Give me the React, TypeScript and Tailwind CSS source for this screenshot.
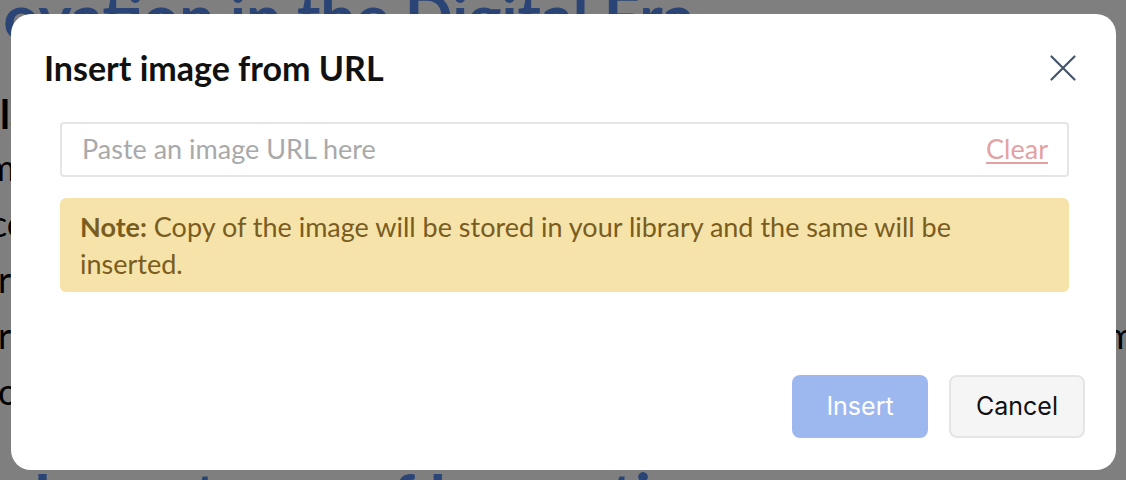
import React from "react";

export default function App() {
  return (
    <div className="relative w-[1126px] h-[480px] overflow-hidden bg-white" style={{ fontFamily: "Lato, 'Noto Sans', sans-serif" }}>
      {/* Document behind the modal */}
      <div className="flex flex-col">
        <div className="whitespace-nowrap ml-[-86px] mt-[-14px] text-[63px] leading-[60px] font-bold text-[#5588ea]">
          Innovation in the Digital Era
        </div>
        <div className="whitespace-nowrap mt-[43px] text-[40px] leading-[50px] font-bold text-black">
          latest developments
        </div>
        <div className="flex flex-col text-[36px] leading-[56px] text-black whitespace-nowrap">
          <div className="ml-[-14px]">mation and creative thinking</div>
          <div className="ml-[-10px]">ccess across every industry</div>
          <div className="ml-[-2px]">rapid change in technology</div>
          <div className="ml-[-2px]">rapid adoption of new digital tools shapes the way people work and communicate today, for</div>
          <div className="ml-[-2px]">opportunities</div>
        </div>
        <div className="whitespace-nowrap ml-[-14px] mt-[46px] text-[61px] leading-[60px] font-bold text-[#5588ea]">
          e Importance of Innovation
        </div>
      </div>

      {/* Overlay */}
      <div className="absolute inset-0 bg-black/50 pl-[11px] pt-[14px]">
        <div className="w-[1105px] h-[456px] bg-white rounded-[20px] flex flex-col">
          <div className="flex items-center justify-between pl-[33px] pr-[40px] pt-[24px] h-[84px]">
            <div className="text-[34px] font-bold text-[#111] leading-[60px]">Insert image from URL</div>
            <svg width="26" height="26" viewBox="0 0 26 26" fill="none">
              <path d="M1.5 1.5 L24.5 24.5 M24.5 1.5 L1.5 24.5" stroke="#44566a" strokeWidth="2.2" strokeLinecap="round" />
            </svg>
          </div>
          <div className="pl-[49px] pr-[47px] mt-[24px] flex flex-col">
            <div className="flex items-center h-[55px] border-2 border-[#e5e5e5] rounded-[4px] pl-[20px] pr-[19px]">
              <input
                className="flex-1 outline-none bg-transparent text-[27px] text-[#333] placeholder:text-[#a9a9a9]"
                style={{ fontFamily: "Lato, 'Noto Sans', sans-serif" }}
                placeholder="Paste an image URL here"
              />
              <span className="text-[27px] text-[#e3a2a2] underline underline-offset-[3px]">Clear</span>
            </div>
            <div className="mt-[21px] bg-[#f5e3a9] rounded-[6px] px-[20px] py-[10px] text-[27px] leading-[37px] text-[#7b5c1f]">
              <span className="font-bold">Note:</span> Copy of the image will be stored in your library and the same will be
              <br />
              inserted.
            </div>
          </div>
          <div className="mt-auto flex justify-end gap-[21px] pr-[31px] pb-[32px]">
            <button className="w-[136px] h-[63px] rounded-[8px] bg-[#9db7ef] text-white text-[25px]" style={{ fontFamily: "Inter, sans-serif" }}>
              Insert
            </button>
            <button className="w-[136px] h-[63px] rounded-[8px] bg-[#f5f5f5] border-2 border-[#e5e5e5] text-[#111] text-[25px]" style={{ fontFamily: "Inter, sans-serif" }}>
              Cancel
            </button>
          </div>
        </div>
      </div>
    </div>
  );
}
